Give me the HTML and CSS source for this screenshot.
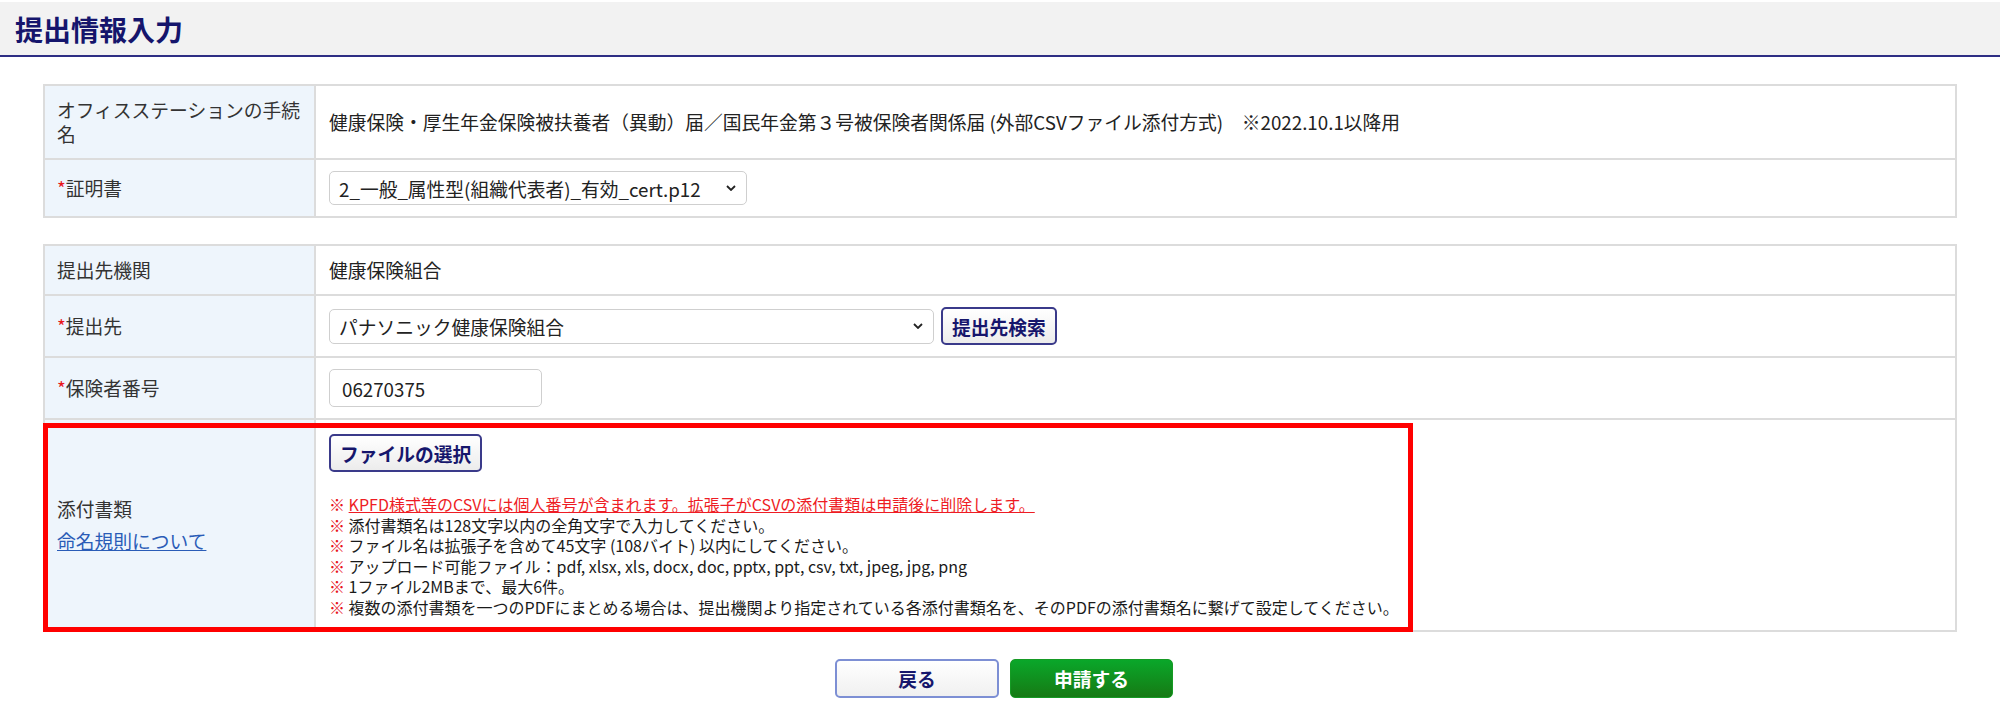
FILE: index.html
```html
<!DOCTYPE html>
<html lang="ja">
<head>
    <meta charset="UTF-8">
    <meta name="viewport" content="width=device-width, initial-scale=1.0">
    <title>提出情報入力</title>
    <link rel="stylesheet" href="styles.css">
</head>
<body>
    <div class="page-header">
        <h1>提出情報入力</h1>
    </div>

    <div class="content">
        <table class="form-table">
            <tr>
                <td class="label">オフィスステーションの手続名</td>
                <td class="value">健康保険・厚生年金保険被扶養者（異動）届／国民年金第３号被保険者関係届 (外部CSVファイル添付方式)　※2022.10.1以降用</td>
            </tr>
            <tr>
                <td class="label"><span class="req">*</span>証明書</td>
                <td class="value ctrl">
                    <div class="select-wrap cert">
                        <select class="select">
                            <option>2_一般_属性型(組織代表者)_有効_cert.p12</option>
                        </select>
                        <svg class="chevron" viewBox="0 0 10 6" width="10" height="6"><path d="M1 1l4 4 4-4" fill="none" stroke="#222" stroke-width="1.8"/></svg>
                    </div>
                </td>
            </tr>
        </table>

        <table class="form-table second">
            <tr>
                <td class="label">提出先機関</td>
                <td class="value">健康保険組合</td>
            </tr>
            <tr>
                <td class="label"><span class="req">*</span>提出先</td>
                <td class="value ctrl">
                    <div class="inline-row">
                        <div class="select-wrap dest">
                            <select class="select">
                                <option>パナソニック健康保険組合</option>
                            </select>
                            <svg class="chevron" viewBox="0 0 10 6" width="10" height="6"><path d="M1 1l4 4 4-4" fill="none" stroke="#222" stroke-width="1.8"/></svg>
                        </div>
                        <button class="btn-sub">提出先検索</button>
                    </div>
                </td>
            </tr>
            <tr>
                <td class="label"><span class="req">*</span>保険者番号</td>
                <td class="value ctrl"><input class="text-input" type="text" value="06270375"></td>
            </tr>
            <tr>
                <td class="label attach-label">
                    <div>添付書類</div>
                    <div><a href="#" class="rule-link">命名規則について</a></div>
                    <div class="mark"></div>
                </td>
                <td class="value attach-value">
                    <button class="btn-sub">ファイルの選択</button>
                    <ul class="notes">
                        <li class="warn"><span class="kome">※</span> <u>KPFD様式等のCSVには個人番号が含まれます。拡張子がCSVの添付書類は申請後に削除します。 </u></li>
                        <li><span class="kome">※</span> 添付書類名は128文字以内の全角文字で入力してください。</li>
                        <li><span class="kome">※</span> ファイル名は拡張子を含めて45文字 (108バイト) 以内にしてください。</li>
                        <li><span class="kome">※</span> アップロード可能ファイル：pdf, xlsx, xls, docx, doc, pptx, ppt, csv, txt, jpeg, jpg, png</li>
                        <li><span class="kome">※</span> 1ファイル2MBまで、最大6件。</li>
                        <li><span class="kome">※</span> 複数の添付書類を一つのPDFにまとめる場合は、提出機関より指定されている各添付書類名を、そのPDFの添付書類名に繋げて設定してください。</li>
                    </ul>
                </td>
            </tr>
        </table>

        <div class="actions">
            <button class="btn-back">戻る</button>
            <button class="btn-submit">申請する</button>
        </div>
    </div>
</body>
</html>
```

FILE: styles.css
```css
body {
    margin: 0;
    font-family: "Noto Sans CJK JP", "Noto Sans", sans-serif;
    color: #333;
    background-color: #fff;
}
.page-header {
    margin-top: 2px;
    height: 53px;
    background-color: #f2f2f2;
    border-bottom: 2px solid #2e2e84;
    display: flex;
    align-items: center;
    padding-left: 15px;
}
.page-header h1 {
    margin: 0;
    font-size: 28px;
    font-weight: bold;
    color: #15156c;
}
.content {
    padding: 27px 43px 0 43px;
}
.form-table {
    width: 100%;
    border-collapse: collapse;
    font-size: 18.75px;
}
.form-table.second {
    margin-top: 26px;
}
.form-table td {
    border: 2px solid #dcdcdc;
    padding: 12px 14px 12px 13px;
    line-height: 24px;
    vertical-align: middle;
}
.form-table td.label {
    width: 243px;
    background-color: #eef5fc;
    color: #333;
    padding-left: 12px;
}
.form-table td.value {
    color: #222;
}
.form-table td.ctrl {
    padding-top: 11px;
    padding-bottom: 11px;
}
.req {
    color: #e8141b;
}
.select-wrap {
    position: relative;
    display: inline-block;
}
.select {
    appearance: none;
    -webkit-appearance: none;
    font-family: inherit;
    font-size: 18.75px;
    color: #222;
    background-color: #fff;
    border: 1px solid #cfcfcf;
    border-radius: 5px;
    padding: 0 30px 0 9px;
    height: 34px;
    width: 100%;
}
.select-wrap.cert {
    width: 418px;
    vertical-align: middle;
}
.select-wrap.dest {
    width: 605px;
}
.select-wrap.dest .select {
    height: 35px;
}
.chevron {
    position: absolute;
    right: 11px;
    top: 50%;
    margin-top: -3px;
    pointer-events: none;
}
.inline-row {
    display: flex;
    align-items: center;
    gap: 7px;
}
.btn-sub {
    font-family: inherit;
    font-size: 18.75px;
    font-weight: bold;
    color: #16166c;
    background: linear-gradient(#ffffff, #ececec);
    border: 2px solid #3a3a8a;
    border-radius: 5px;
    height: 38px;
    padding: 0 9px;
    cursor: pointer;
}
.text-input {
    font-family: inherit;
    font-size: 18.75px;
    color: #222;
    width: 213px;
    height: 38px;
    box-sizing: border-box;
    border: 1px solid #cfcfcf;
    border-radius: 5px;
    padding: 0 12px;
    vertical-align: middle;
}
.attach-label {
    position: relative;
}
.attach-label div {
    line-height: 32px;
}
.rule-link {
    color: #2a5cb7;
    text-decoration: underline;
}
.mark {
    position: absolute;
    left: -2px;
    top: 3px;
    bottom: -2px;
    width: 1370px;
    box-sizing: border-box;
    border: 5px solid #ff0000;
    pointer-events: none;
}
.form-table td.attach-value {
    vertical-align: top;
    padding-top: 14px;
    padding-bottom: 12px;
}
.notes {
    list-style: none;
    margin: 22px 0 0 0;
    padding: 0;
    font-size: 16px;
    line-height: 20px;
    color: #1a1a1a;
}
.notes li {
    height: 20.6px;
}
.kome {
    color: #e8141b;
}
.notes .warn {
    color: #ee1c24;
}
.actions {
    display: flex;
    justify-content: center;
    gap: 11px;
    margin-top: 27px;
    padding-left: 8px;
}
.btn-back,
.btn-submit {
    font-family: inherit;
    font-size: 18.75px;
    font-weight: bold;
    height: 39px;
    border-radius: 5px;
    cursor: pointer;
}
.btn-back {
    width: 164px;
    color: #16166c;
    background: linear-gradient(#ffffff, #f0f0f0);
    border: 2px solid #7d8fd4;
}
.btn-submit {
    width: 163px;
    color: #fff;
    background: linear-gradient(#0aa72a, #167a14);
    border: 1px solid #169a24;
}
```
